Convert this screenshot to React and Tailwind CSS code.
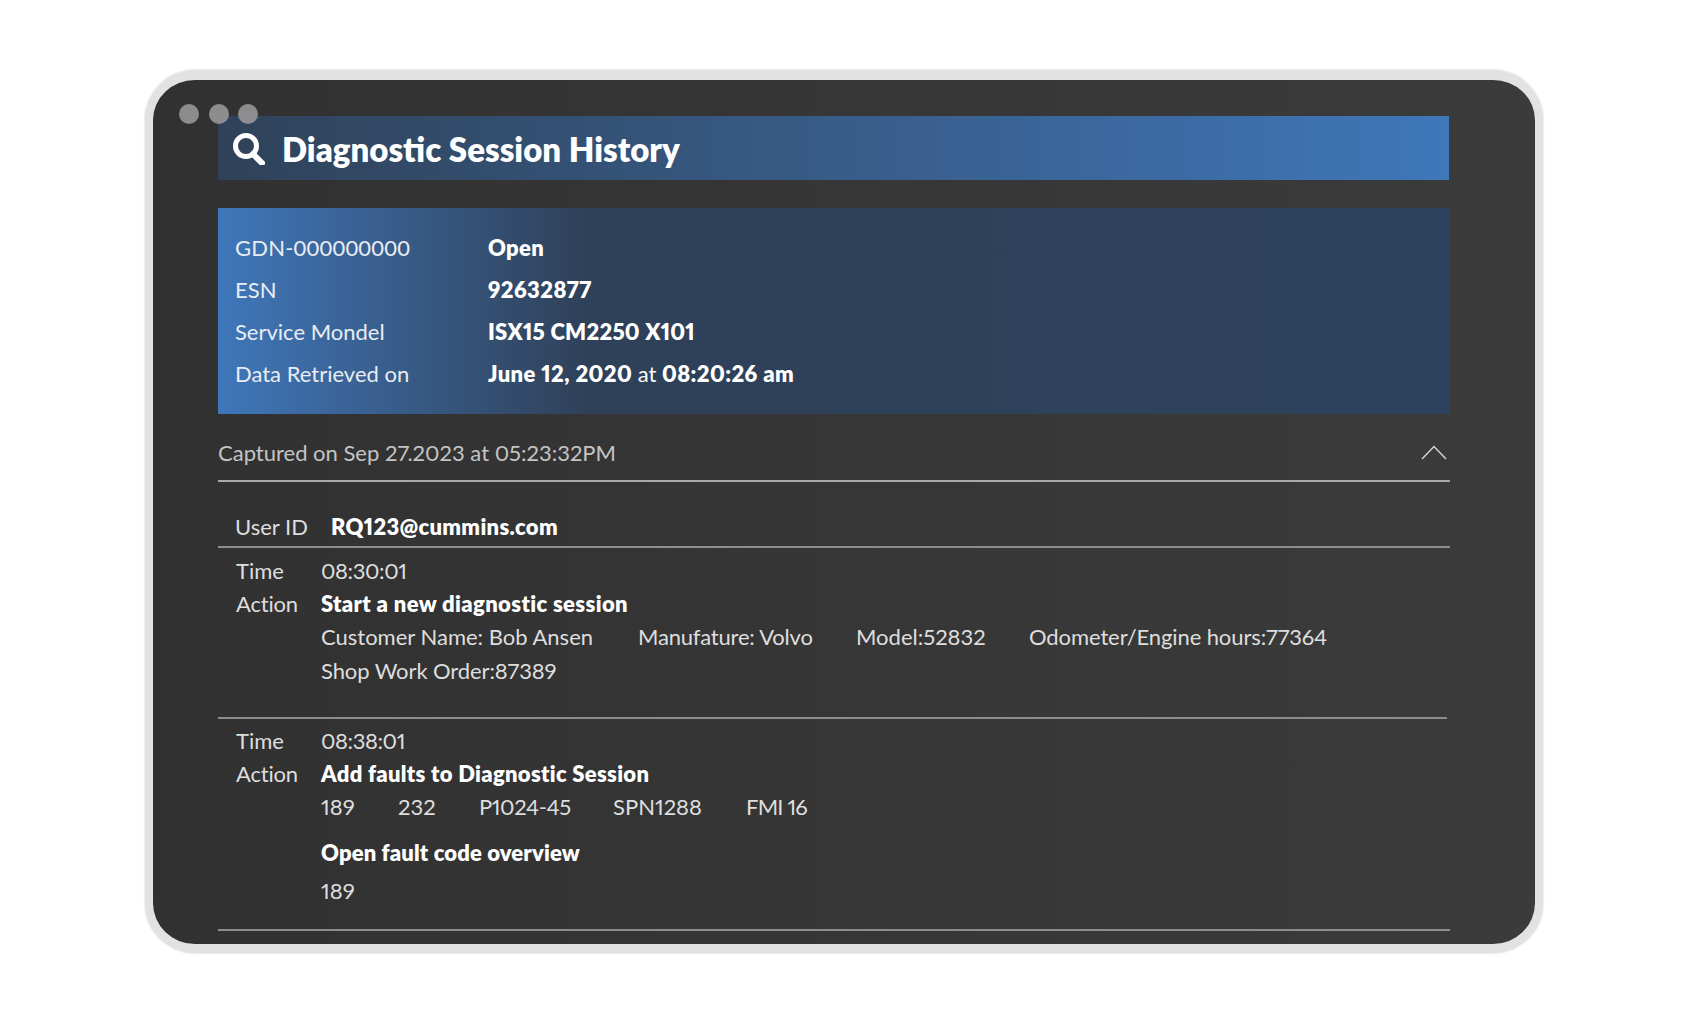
const infoRows = [
    { label: <span className="tabular-nums tracking-[0.2px]">GDN-000000000</span>, key: "gdn", value: <b className="font-extrabold tracking-[0.3px]">Open</b> },
    { label: "ESN", key: "esn", value: <b className="font-extrabold tracking-[0.4px]">92632877</b> },
    { label: "Service Mondel", key: "model", value: <b className="font-extrabold tracking-[0.25px]">ISX15 CM2250 X101</b> },
    {
        label: "Data Retrieved on",
        key: "date",
        value: (
            <>
                <b className="font-extrabold tracking-[0.4px]">June 12, 2020</b> at <b className="font-extrabold tracking-[0.4px]">08:20:26 am</b>
            </>
        ),
    },
]

function SearchIcon() {
    return (
        <svg width="33" height="33" viewBox="0 0 33 33" fill="none" stroke="white" strokeWidth="5">
            <circle cx="14" cy="14" r="10.5" />
            <path d="M21 22 L30 31" strokeWidth="6" strokeLinecap="round" />
        </svg>
    )
}

function Chevron() {
    return (
        <svg width="26" height="15" viewBox="0 0 26 15" fill="none" stroke="#d4d4d4" strokeWidth="1.5">
            <path d="M1 14 L13 1.5 L25 14" />
        </svg>
    )
}

function App() {
    return (
        <div className="w-[1687px] h-[1024px] bg-white pt-[70px] pl-[145px] overflow-hidden font-[Lato,sans-serif] proportional-nums">
            <div className="relative w-[1398px] h-[883px] rounded-[50px] border-x-8 border-t-[10px] border-b-[9px] border-[#e2e2e2] shadow-[0_0_2px_#bdbdbd] bg-gradient-to-r from-[#313131] to-[#3b3b3b] pl-[65px] pt-[36px]">
                <div className="absolute left-[26px] top-[24px] flex gap-[9.5px]">
                    <div className="w-5 h-5 rounded-full bg-[#979797]/90"></div>
                    <div className="w-5 h-5 rounded-full bg-[#979797]/90"></div>
                    <div className="w-5 h-5 rounded-full bg-[#979797]/90"></div>
                </div>

                <div className="w-[1231px] h-[64px] flex items-center pl-[14px] gap-[17px] bg-gradient-to-r from-[#2f4259] to-[#3f77ba]">
                    <SearchIcon />
                    <h1 className="pt-[3px] text-[33px] font-extrabold text-white">Diagnostic Session History</h1>
                </div>

                <div className="w-[1232px] h-[206px] mt-[28px] pt-[18px] pl-[17px] bg-gradient-to-r from-[#3f77ba] via-[#2f4159] via-[30%] to-[#2d425c]">
                    {infoRows.map((row) => (
                        <div key={row.key} className="h-[42px] flex items-center text-[22px] text-[#e8edf3]">
                            <span className="w-[253px]">{row.label}</span>
                            <span className="text-white">{row.value}</span>
                        </div>
                    ))}
                </div>

                <div className="w-[1232px] h-[68px] pt-[11px] flex items-center justify-between pr-[3px] border-b-2 border-[#a9a9a9] text-[22px] text-[#c4c4c4]">
                    <span>Captured on Sep 27.2023 at 05:23:32PM</span>
                    <Chevron />
                </div>

                <div className="w-[1232px] h-[66px] pt-[24px] pl-[17px] flex items-center border-b-2 border-[#8d8d8d] text-[22px] text-[#dedede]">
                    <span className="w-[96px]">User ID</span>
                    <b className="font-extrabold text-white tracking-[0.3px]">RQ123@cummins.com</b>
                </div>

                <div className="w-[1229px] h-[171px] pl-[18px] pt-[6px] border-b-2 border-[#8d8d8d] text-[22px] text-[#dedede]">
                    <div className="h-[33px] flex items-center">
                        <span className="w-[85px]">Time</span>
                        <span className="tracking-[-0.4px]">08:30:01</span>
                    </div>
                    <div className="h-[33px] flex items-center">
                        <span className="w-[85px] tracking-[-0.2px]">Action</span>
                        <b className="font-extrabold text-white tracking-[0.36px]">Start a new diagnostic session</b>
                    </div>
                    <div className="h-[33px] flex items-center pl-[85px]">
                        <span className="w-[317px]">Customer Name: Bob Ansen</span>
                        <span className="w-[218px] tracking-[-0.2px]">Manufature: Volvo</span>
                        <span className="w-[173px]">Model:52832</span>
                        <span className="tracking-[-0.1px]">Odometer/Engine hours:77364</span>
                    </div>
                    <div className="h-[35px] flex items-center pl-[85px] tracking-[-0.1px]">Shop Work Order:87389</div>
                </div>

                <div className="w-[1232px] h-[212px] pl-[18px] pt-[5px] border-b-2 border-[#8d8d8d] text-[22px] text-[#dedede]">
                    <div className="h-[33px] flex items-center">
                        <span className="w-[85px]">Time</span>
                        <span className="tracking-[-0.4px]">08:38:01</span>
                    </div>
                    <div className="h-[33px] flex items-center">
                        <span className="w-[85px] tracking-[-0.2px]">Action</span>
                        <b className="font-extrabold text-white tracking-[0.3px]">Add faults to Diagnostic Session</b>
                    </div>
                    <div className="h-[33px] flex items-center pl-[85px]">
                        <span className="w-[77px]">189</span>
                        <span className="w-[81px]">232</span>
                        <span className="w-[134px] tracking-[-0.4px]">P1024-45</span>
                        <span className="w-[133px]">SPN1288</span>
                        <span className="tracking-[-0.8px]">FMI 16</span>
                    </div>
                    <div className="mt-[13px] h-[33px] flex items-center pl-[85px]">
                        <b className="font-extrabold text-white tracking-[0.14px]">Open fault code overview</b>
                    </div>
                    <div className="mt-[5px] h-[33px] flex items-center pl-[85px]">189</div>
                </div>
            </div>
        </div>
    )
}

export default App
